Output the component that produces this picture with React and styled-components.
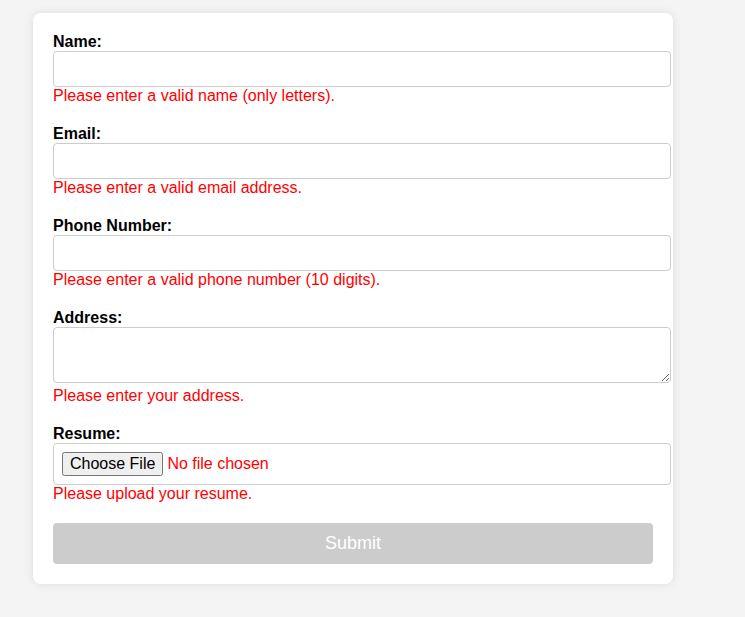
import React, { useState } from 'react';
import styled, { createGlobalStyle } from 'styled-components';

const GlobalStyle = createGlobalStyle`
  body {
    margin: 0;
    background: #f4f4f4;
    font-family: 'Liberation Sans', Arial, sans-serif;
  }
`;

const Page = styled.div`
  padding: 13px 0 33px 33px;
`;

const Card = styled.form`
  width: 600px;
  padding: 20px;
  background: #ffffff;
  border-radius: 8px;
  box-shadow: 0 0 10px rgba(0, 0, 0, 0.1);
`;

const Field = styled.div`
  margin-bottom: 20px;
`;

const Label = styled.label`
  display: block;
  font-weight: bold;
  font-size: 16px;
  color: #000;
`;

const Input = styled.input`
  display: block;
  width: 100%;
  padding: 8px;
  margin: 0;
  border: 1px solid #ccc;
  border-radius: 4px;
  font-size: 16px;
  font-family: 'Liberation Sans', Arial, sans-serif;
  line-height: 18px;
  height: 18px;
  color: ${(p) => (p.type === 'file' ? '#ff0000' : '#000')};

  &[type='file'] {
    height: 24px;
  }

  &::file-selector-button {
    font-size: 16px;
    font-family: 'Liberation Sans', Arial, sans-serif;
    color: #000;
  }
`;

const TextArea = styled.textarea`
  display: block;
  width: 100%;
  height: 38px;
  padding: 8px;
  margin: 0 0 4px;
  border: 1px solid #ccc;
  border-radius: 4px;
  font-size: 16px;
  font-family: 'Liberation Sans', Arial, sans-serif;
`;

const Error = styled.div`
  color: #ff0000;
  font-size: 16px;
  line-height: 18px;
`;

const Submit = styled.button`
  display: block;
  width: 100%;
  height: 41px;
  border: none;
  border-radius: 4px;
  background: #cccccc;
  color: #ffffff;
  font-size: 18px;
  font-family: 'Liberation Sans', Arial, sans-serif;
  cursor: not-allowed;
`;

const fields = [
  { id: 'name', label: 'Name:', error: 'Please enter a valid name (only letters).' },
  { id: 'email', label: 'Email:', error: 'Please enter a valid email address.' },
  { id: 'phone', label: 'Phone Number:', error: 'Please enter a valid phone number (10 digits).' },
];

export default function App() {
  const [values, setValues] = useState({ name: '', email: '', phone: '', address: '' });

  const update = (key) => (e) => setValues({ ...values, [key]: e.target.value });

  return (
    <Page>
      <GlobalStyle />
      <Card onSubmit={(e) => e.preventDefault()}>
        {fields.map((f) => (
          <Field key={f.id}>
            <Label htmlFor={f.id}>{f.label}</Label>
            <Input id={f.id} type="text" value={values[f.id]} onChange={update(f.id)} />
            <Error>{f.error}</Error>
          </Field>
        ))}
        <Field>
          <Label htmlFor="address">Address:</Label>
          <TextArea id="address" value={values.address} onChange={update('address')} />
          <Error>Please enter your address.</Error>
        </Field>
        <Field>
          <Label htmlFor="resume">Resume:</Label>
          <Input id="resume" type="file" />
          <Error>Please upload your resume.</Error>
        </Field>
        <Submit type="submit" disabled>Submit</Submit>
      </Card>
    </Page>
  );
}
